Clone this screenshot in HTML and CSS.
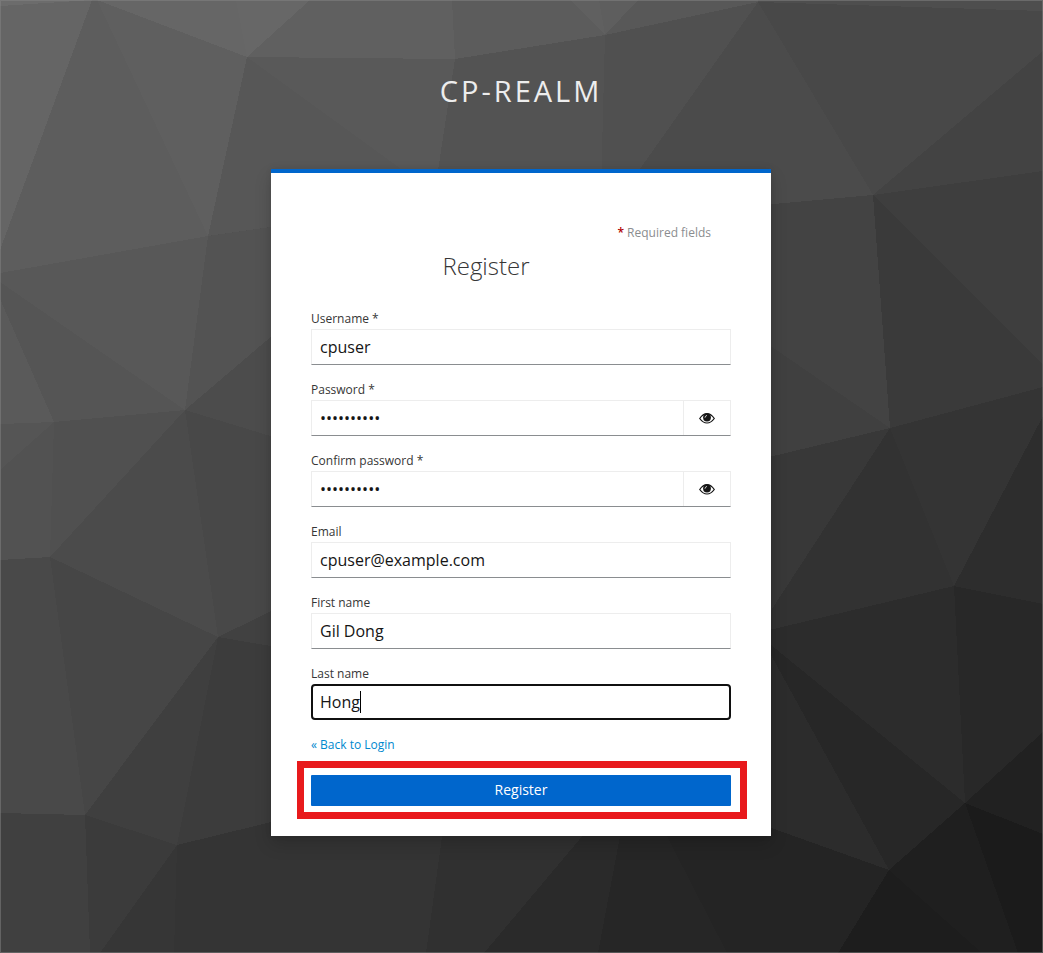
FILE: index.html
```html
<!DOCTYPE html>
<html lang="en">
<head>
<meta charset="utf-8">
<title>Register</title>
<link rel="stylesheet" href="styles.css">
</head>
<body>
<svg class="backdrop" viewBox="0 0 1043 953" preserveAspectRatio="none" aria-hidden="true">
  <rect width="1043" height="953" fill="#505050"/>
  <g fill="#6c6c6c"><path d="M0 0H95L0 6Z"/></g>
  <path fill="#656565" d="M0 6L92 0L0 250Z"/>
  <path fill="#5d5d5d" d="M92 0H97L208 236L0 273V250Z"/>
  <path fill="#5f5f5f" d="M97 0L247 57L208 236Z"/>
  <path fill="#666" d="M97 0H236L247 57Z"/>
  <path fill="#676767" d="M236 0H310L247 57Z"/>
  <path fill="#606060" d="M310 0H452L455 59L247 57Z"/>
  <path fill="#595959" d="M247 57L455 59L437 190H430Z"/>
  <path fill="#575757" d="M247 57L430 190L271 227L208 236Z"/>
  <path fill="#5c5c5c" d="M452 0H570L605 35L455 59Z"/>
  <path fill="#606060" d="M570 0H599L605 35Z"/>
  <path fill="#5e5e5e" d="M599 0H638L605 35Z"/>
  <path fill="#585858" d="M638 0H765L758 2L605 35Z"/>
  <path fill="#535353" d="M455 59L605 35L601 190H435Z"/>
  <path fill="#505050" d="M605 35L758 2L625 190H601Z"/>
  <path fill="#4b4b4b" d="M758 2L873 195L740 207L625 190Z"/>
  <path fill="#4e4e4e" d="M758 0H1043V11L758 2Z"/>
  <path fill="#484848" d="M758 2L1043 11V51L873 195Z"/>
  <path fill="#434343" d="M1043 51V171L873 195ZM873 195L890 428L740 325V207Z"/>
  <path fill="#3e3e3e" d="M873 195L1043 171V365Z"/>
  <path fill="#3a3a3a" d="M873 195L1043 365V387L890 428Z"/>
  <path fill="#404040" d="M740 325L890 428L740 464Z"/>
  <path fill="#383838" d="M740 464L890 428L740 658Z"/>
  <path fill="#323232" d="M890 428L954 586L740 637V658Z"/>
  <path fill="#343434" d="M890 428L1043 387V416L954 586Z"/>
  <path fill="#2d2d2d" d="M1043 416V604L954 586Z"/>
  <path fill="#282828" d="M954 586L1043 604V732L965 803Z"/>
  <path fill="#2c2c2c" d="M740 637L954 586L965 803L771 645Z"/>
  <path fill="#272727" d="M771 645L965 803L889 870L771 655Z"/>
  <path fill="#2c2c2c" d="M771 655L889 870L771 828Z"/>
  <path fill="#212121" d="M965 803L1043 732V834Z"/>
  <path fill="#1b1b1b" d="M965 803L1043 834V953H1018Z"/>
  <path fill="#1f1f1f" d="M965 803L1018 953H982L889 870Z"/>
  <path fill="#1d1d1d" d="M889 870L982 953H838Z"/>
  <path fill="#585858" d="M0 273L208 236L185 410L0 282Z"/>
  <path fill="#555" d="M0 282L185 410L54 422L0 299Z"/>
  <path fill="#5a5a5a" d="M0 299L54 422L0 424Z"/>
  <path fill="#555" d="M0 424L54 422L0 470Z"/>
  <path fill="#525252" d="M0 470L54 422L50 557L0 560Z"/>
  <path fill="#505050" d="M54 422L185 410L50 557Z"/>
  <path fill="#535353" d="M208 236L300 223V312L185 410Z"/>
  <path fill="#4c4c4c" d="M185 410L300 312V445Z"/>
  <path fill="#484848" d="M185 410L300 445V597L218 637Z"/>
  <path fill="#4b4b4b" d="M50 557L185 410L218 637Z"/>
  <path fill="#494949" d="M0 560L50 557L85 815L0 813Z"/>
  <path fill="#464646" d="M50 557L218 637L85 815Z"/>
  <path fill="#414141" d="M218 637L300 597V651Z"/>
  <path fill="#3f3f3f" d="M218 637L177 845L85 815Z"/>
  <path fill="#3c3c3c" d="M218 637L300 651V815L177 845Z"/>
  <path fill="#404040" d="M0 813L85 815L90 953H0Z"/>
  <path fill="#3b3b3b" d="M85 815L177 845L100 953H90Z"/>
  <path fill="#363636" d="M177 845L174 953H100Z"/>
  <path fill="#343434" d="M177 845L300 815H445L426 953H174Z"/>
  <path fill="#303030" d="M445 815H600L484 953H426Z"/>
  <path fill="#2a2a2a" d="M600 815H624L598 953H484Z"/>
  <path fill="#262626" d="M624 815H656L727 953H598Z"/>
  <path fill="#242424" d="M656 815H735L889 870L838 953H727Z"/>
</svg>
<main class="page">
  <header class="realm">CP-REALM</header>
  <section class="card">
    <div class="required"><span class="star">*</span> Required fields</div>
    <h1 class="heading">Register</h1>
    <form class="form">
      <div class="group"><label class="label">Username *</label><div class="field"><span class="value">cpuser</span></div></div>
      <div class="group"><label class="label">Password *</label>
        <div class="field"><span class="value dots">••••••••••</span><span class="reveal"><svg class="eye" viewBox="0 0 16 12"><path fill="#fff" stroke="#151515" stroke-width="1.200" d="M.7 6.500Q4 1.600 8 1.600T15.300 6.500Q12 11 8 11T.7 6.500Z"/><circle cx="8" cy="5.500" r="3.900" fill="#151515"/><path fill="none" stroke="#fff" stroke-width=".8" stroke-linecap="round" d="M6 5.300Q6.100 3.800 7.600 3.500"/></svg></span></div></div>
      <div class="group"><label class="label">Confirm password *</label>
        <div class="field"><span class="value dots">••••••••••</span><span class="reveal"><svg class="eye" viewBox="0 0 16 12"><path fill="#fff" stroke="#151515" stroke-width="1.200" d="M.7 6.500Q4 1.600 8 1.600T15.300 6.500Q12 11 8 11T.7 6.500Z"/><circle cx="8" cy="5.500" r="3.900" fill="#151515"/><path fill="none" stroke="#fff" stroke-width=".8" stroke-linecap="round" d="M6 5.300Q6.100 3.800 7.600 3.500"/></svg></span></div></div>
      <div class="group"><label class="label">Email</label><div class="field"><span class="value">cpuser@example.com</span></div></div>
      <div class="group"><label class="label">First name</label><div class="field"><span class="value">Gil Dong</span></div></div>
      <div class="group"><label class="label">Last name</label><div class="field focused"><span class="value">Hong</span><span class="caret"></span></div></div>
      <a class="back">« Back to Login</a>
      <div class="highlight"><button class="submit" type="button">Register</button></div>
    </form>
  </section>
</main>
<div class="frame"></div>
</body>
</html>
```
FILE: styles.css
```css
* { box-sizing: border-box; }
body {
  margin: 0;
  height: 953px;
  overflow: hidden;
  background: #444;
  font-family: "Open Sans", "Noto Sans", sans-serif;
  color: #363636;
}
/* Crisp facets avoid seams between neighbours; the slight blur smooths their edges. */
.backdrop {
  position: absolute;
  inset: 0;
  width: 100%;
  height: 100%;
  shape-rendering: crispEdges;
  filter: blur(.6px);
}
.frame { position: absolute; inset: 0; border: 1px solid rgba(133, 133, 133, .5); pointer-events: none; }
.page {
  position: relative;
  width: 500px;
  margin-left: 271px;
  padding-top: 71px;
}
.realm {
  height: 98px;
  font-size: 29px;
  line-height: 40px;
  letter-spacing: 3px;
  text-align: center;
  color: #ededed;
}
.card {
  height: 667px;
  padding: 52px 40px 0;
  border-top: 4px solid #06c;
  background: #fff;
  box-shadow: 0 8px 16px rgba(3, 3, 3, .16), 0 0 6px rgba(3, 3, 3, .08);
}
.required { padding-right: 20px; font-size: 12px; line-height: 16px; text-align: right; color: #8b8d8f; }
.star { color: #b00000; font-weight: 600; }
.heading {
  margin: 9px 70px 26px 0;
  font-size: 24px;
  line-height: 32px;
  font-weight: 300;
  text-align: center;
}
.form { display: flex; flex-direction: column; }
.group { height: 71px; }
.label { display: block; height: 21px; padding-top: 2px; font-size: 12px; line-height: 18px; }
.field {
  display: flex;
  align-items: center;
  height: 36px;
  padding-left: 8px;
  border: 1px solid #ededed;
  border-bottom-color: #8a8d90;
  font-size: 16px;
  line-height: 24px;
  color: #151515;
}
.dots { flex: 1; font-size: 16px; letter-spacing: 0; }
.reveal {
  display: flex;
  align-items: center;
  justify-content: center;
  width: 47px;
  height: 34px;
  border-left: 1px solid #ededed;
}
.eye { width: 16px; height: 12px; }
.focused { padding-left: 7px; border: 2px solid #101010; border-radius: 4px; }
.caret { width: 1px; height: 22px; background: #000; }
.back { margin-top: 2px; font-size: 12px; line-height: 18px; color: #0088ce; }
.highlight {
  margin: 7px -16px 0 -14.500px;
  padding: 7px 9px 5.500px 7.500px;
  border: 7px solid #e81a1c;
}
.submit {
  display: block;
  width: 100%;
  height: 31px;
  padding: 0 0 1px;
  border: 0;
  border-radius: 1px;
  background: #06c;
  color: #fff;
  font: 400 14px/28px "Open Sans", sans-serif;
}
```
